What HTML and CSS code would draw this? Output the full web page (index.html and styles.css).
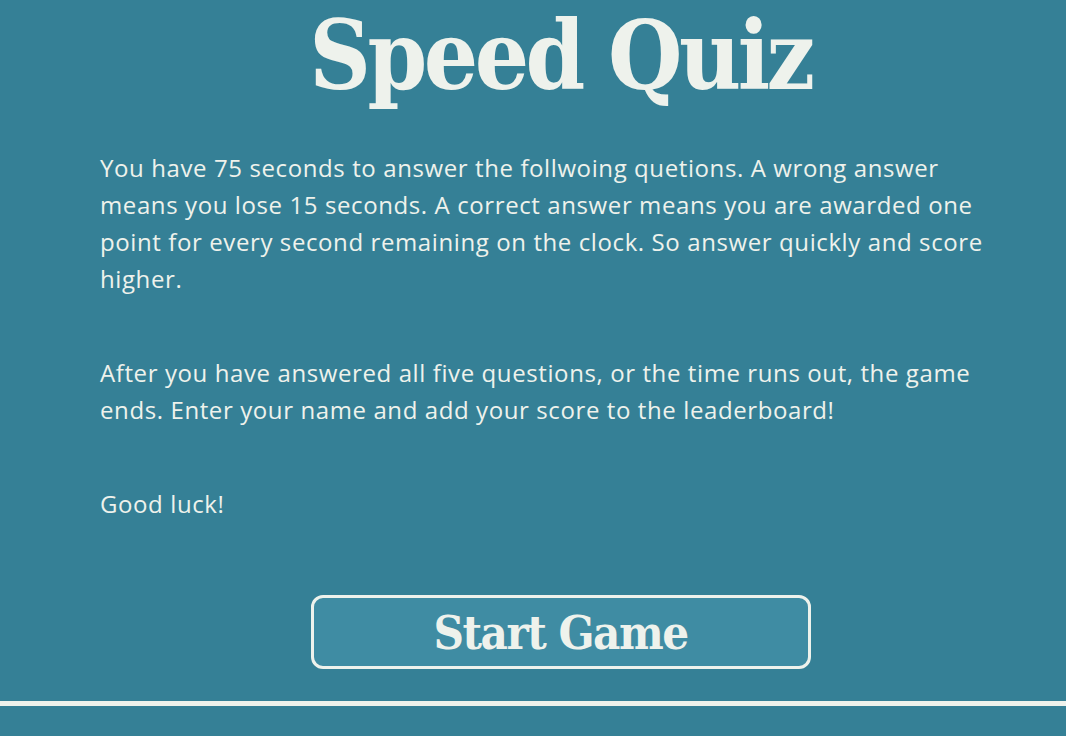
FILE: index.html
```html
<!DOCTYPE html>
<html lang="en">
<head>
<meta charset="utf-8">
<title>Speed Quiz</title>
<link rel="stylesheet" href="styles.css">
</head>
<body>
<main class="quiz">
  <h1 class="title">Speed Quiz</h1>
  <section class="intro">
    <p>You have 75 seconds to answer the follwoing quetions. A wrong answer means you lose 15 seconds. A correct answer means you are awarded one point for every second remaining on the clock. So answer quickly and score higher.</p>
    <p>After you have answered all five questions, or the time runs out, the game ends. Enter your name and add your score to the leaderboard!</p>
    <p>Good luck!</p>
  </section>
  <div class="actions">
    <button class="start" type="button">Start Game</button>
  </div>
</main>
<hr class="rule">
</body>
</html>
```

FILE: styles.css
```css
html, body {
  margin: 0;
  padding: 0;
  background: #358096;
}
body {
  height: 736px;
  overflow: hidden;
  color: #eef2ec;
  font-family: "Open Sans", "Noto Sans", sans-serif;
}
.quiz {
  width: 921px;
  margin-left: 100px;
  box-sizing: border-box;
}
.title {
  margin: 0;
  padding-top: 0;
  text-align: center;
  font-family: "DejaVu Serif", serif;
  font-stretch: condensed;
  font-weight: 900;
  font-size: 95px;
  line-height: 111px;
  letter-spacing: -3.5px;
}
.intro {
  display: flex;
  flex-direction: column;
  gap: 57px;
  margin-top: 38px;
}
.intro p {
  margin: 0;
  max-width: 905px;
  font-size: 24px;
  line-height: 37px;
  letter-spacing: 0.6px;
}
.actions {
  display: flex;
  justify-content: center;
  margin-top: 73px;
}
.start {
  width: 500px;
  height: 74px;
  background: #3f8ca3;
  color: #eef2ec;
  border: 3px solid #eef2ec;
  border-radius: 12px;
  font-family: "DejaVu Serif", serif;
  font-stretch: condensed;
  font-weight: 900;
  font-size: 47px;
  letter-spacing: -1.5px;
  padding: 0;
}
.rule {
  margin: 32px 0 0;
  border: 0;
  height: 5px;
  background: #eef2ec;
}
```
